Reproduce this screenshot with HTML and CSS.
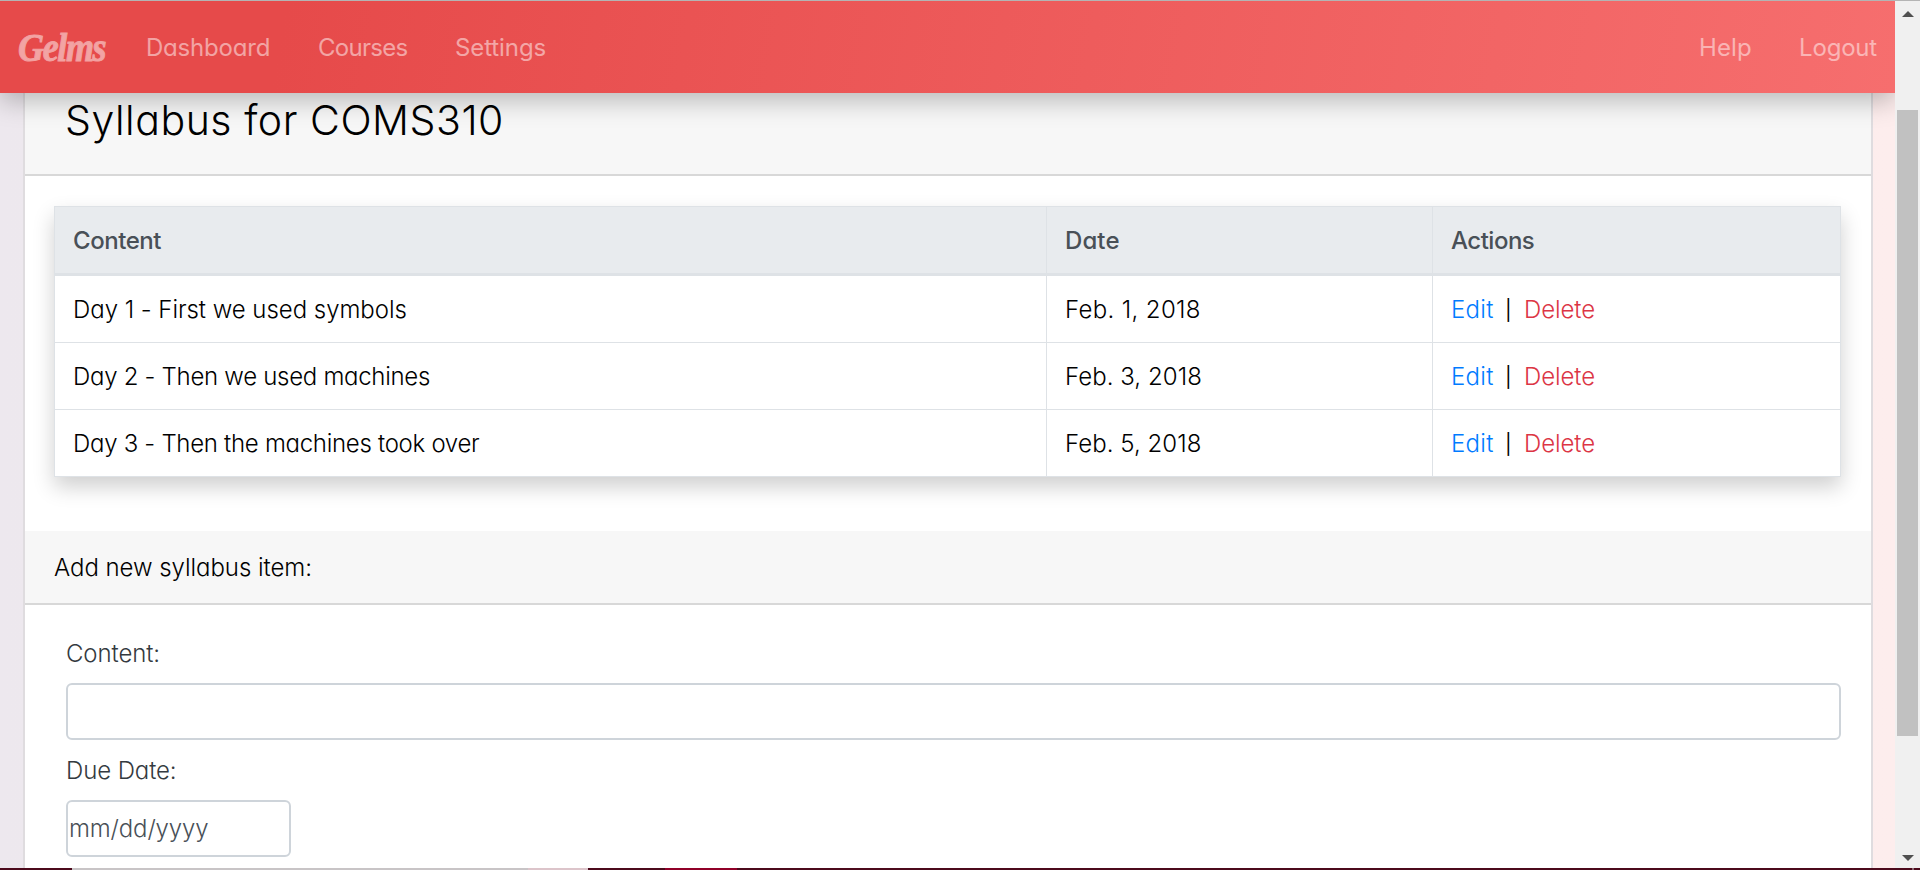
FILE: index.html
```
<!DOCTYPE html>
<html lang="en">
<head>
<meta charset="utf-8">
<title>Gelms</title>
<link rel="stylesheet" href="styles.css">
</head>
<body>
<div class="window">
  <div class="page">
    <nav class="navbar">
      <a class="brand"><span class="brand-text">Gelms</span></a>
      <a class="nav-dashboard">Dashboard</a>
      <a class="nav-courses">Courses</a>
      <a class="nav-settings">Settings</a>
      <span class="spacer"></span>
      <a class="nav-help">Help</a>
      <a class="nav-logout">Logout</a>
    </nav>
    <main class="card">
      <header class="card-header"><h1>Syllabus for COMS310</h1></header>
      <section class="card-body">
        <table class="table">
          <colgroup><col class="col-content"><col class="col-date"><col class="col-actions"></colgroup>
          <thead>
            <tr><th class="h-content">Content</th><th class="h-date">Date</th><th class="h-actions">Actions</th></tr>
          </thead>
          <tbody>
            <tr><td class="day-one">Day 1 - First we used symbols</td><td class="date date-one">Feb. 1, 2018</td><td><div class="actions"><a class="edit">Edit</a><span class="bar">|</span><a class="delete">Delete</a></div></td></tr>
            <tr><td class="tight">Day 2 - Then we used machines</td><td class="date">Feb. 3, 2018</td><td><div class="actions"><a class="edit">Edit</a><span class="bar">|</span><a class="delete">Delete</a></div></td></tr>
            <tr><td class="tight">Day 3 - Then the machines took over</td><td class="date">Feb. 5, 2018</td><td><div class="actions"><a class="edit">Edit</a><span class="bar">|</span><a class="delete">Delete</a></div></td></tr>
          </tbody>
        </table>
      </section>
      <div class="form-header">Add new syllabus item:</div>
      <form class="form">
        <label>Content:</label>
        <div class="input"></div>
        <label>Due Date:</label>
        <div class="input input-date">mm/dd/yyyy</div>
      </form>
    </main>
  </div>
  <div class="scrollbar">
    <svg class="arrow-up" width="12" height="6" viewBox="0 0 12 6"><path d="M0 6L6 0l6 6z" fill="#505050"/></svg>
    <div class="thumb"></div>
    <svg class="arrow-down" width="12" height="6" viewBox="0 0 12 6"><path d="M0 0L6 6l6-6z" fill="#505050"/></svg>
  </div>
</div>
<div class="taskbar"></div>
</body>
</html>
```
FILE: styles.css
```
* { box-sizing: border-box; }
body {
  margin: 0;
  height: 870px;
  overflow: hidden;
  display: flex;
  flex-direction: column;
  font-family: Inter, "Liberation Sans", sans-serif;
  font-feature-settings: "cv11";
  font-size: 24px;
  font-weight: 320;
  line-height: 36px;
  color: #000;
}
.window {
  flex: 0 0 868px;
  display: flex;
  border-top: 1px solid #b4b4b4;
  overflow: hidden;
}
.page {
  flex: 0 0 1895px;
  display: flex;
  flex-direction: column;
  background: linear-gradient(90deg, #ede8ee, #fdeded);
  overflow: hidden;
}
.navbar {
  position: relative;
  z-index: 1;
  flex: 0 0 92px;
  display: flex;
  align-items: center;
  padding: 2px 18px 0 18px;
  background: linear-gradient(100deg, #e64a4a 15%, #f66e6e);
  box-shadow: 0 8px 24px rgba(0, 0, 0, .25);
  color: rgba(255, 255, 255, .5);
  font-weight: 400;
}
.brand { width: 128px; }
.brand-text {
  display: inline-block;
  font: italic bold 40px/44px "Liberation Serif", serif;
  letter-spacing: -1.5px;
  -webkit-text-stroke: 1px #f2a1a1;
  transform: scaleX(.9);
  transform-origin: left center;
}
.nav-dashboard { width: 172px; letter-spacing: -.2px; }
.nav-courses { width: 137px; letter-spacing: -.7px; }
.nav-settings { letter-spacing: -.1px; }
.spacer { flex: 1; }
.nav-help { width: 100px; letter-spacing: .1px; }
.nav-logout { letter-spacing: -.2px; }
.card {
  width: 1850px;
  flex: 1 0 auto;
  margin-left: 23px;
  background: #fff;
  border: solid #dfdcdf;
  border-width: 0 2px;
}
.card-header {
  height: 83px;
  padding: 3px 40px;
  background: #f7f7f7;
  border-bottom: 2px solid #d8d8d8;
}
h1 {
  margin: 0;
  font-size: 41px;
  font-weight: 320;
  line-height: 48px;
  letter-spacing: .55px;
}
.card-body { height: 355px; padding: 30px 29px 0; }
.table {
  width: 1787px;
  table-layout: fixed;
  border-collapse: separate;
  border-spacing: 0;
  border: solid #dee2e6;
  border-width: 1px 0 0 1px;
  box-shadow: 0 10px 20px rgba(0, 0, 0, .19);
}
.col-content { width: 992px; }
.col-date { width: 386px; }
th, td {
  height: 67px;
  padding: 2px 18px 0;
  text-align: left;
  border: solid #dee2e6;
  border-width: 0 1px 1px 0;
}
th {
  height: 69px;
  background: #e8ebee;
  color: #495057;
  font-weight: 500;
  border-bottom-width: 3px;
}
.h-content { letter-spacing: -.45px; }
.h-date { letter-spacing: .1px; }
.h-actions { letter-spacing: -.5px; }
.day-one { letter-spacing: -.04px; }
.tight { letter-spacing: -.29px; }
.date { letter-spacing: .05px; }
.date-one { letter-spacing: .35px; }
.actions { display: flex; }
.edit { width: 54px; color: #007bff; letter-spacing: .3px; }
.bar { width: 19px; font-size: 20px; font-weight: 400; }
.delete { color: #dc3545; letter-spacing: -.1px; }
.form-header {
  height: 74px;
  padding: 19px 29px;
  background: #f7f7f7;
  border-bottom: 2px solid #d8d8d8;
  letter-spacing: -.05px;
}
.form {
  display: flex;
  flex-direction: column;
  padding: 31px 30px 0 41px;
}
label { color: #343a40; letter-spacing: -.1px; }
.input {
  height: 57px;
  margin: 11px 0 13px;
  padding: 9px 1px;
  border: 2px solid #ced4da;
  border-radius: 6px;
  color: #495057;
  letter-spacing: -.15px;
}
.input-date { width: 225px; }
.scrollbar {
  flex: 1;
  display: flex;
  flex-direction: column;
  align-items: center;
  padding: 10px 0 7px;
  background: #f0f0f0;
}
.thumb { width: 21px; height: 626px; margin: 93px 0 auto; background: #c1c1c1; }
.taskbar {
  height: 2px;
  background: linear-gradient(90deg, #4c0a1c 72px, #c8c4c6 72px 528px, #dcc4ca 528px 588px, #4c0a1c 588px 665px, #900028 665px 737px, #4c0a1c 737px 1912px, #8a6a74 1912px 1914px, #4c0a1c 1914px);
}
```
